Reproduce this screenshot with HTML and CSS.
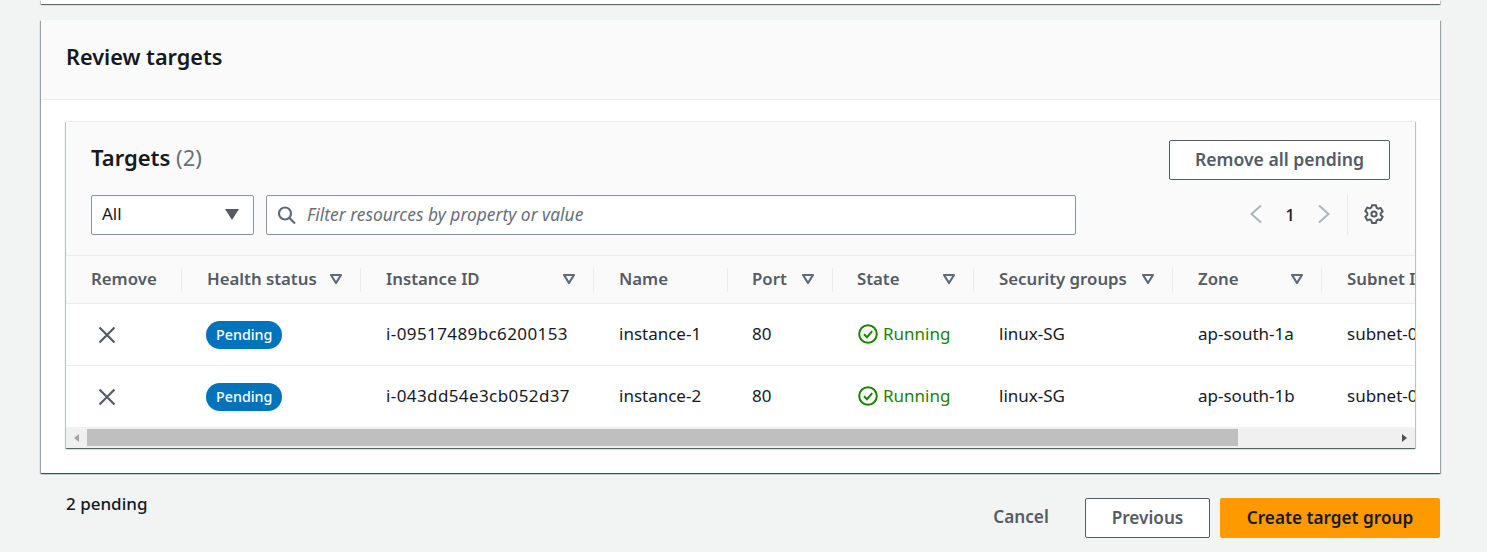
FILE: index.html
```html
<!DOCTYPE html>
<html lang="en">
  <head>
    <meta charset="UTF-8" />
    <meta name="viewport" content="width=device-width, initial-scale=1.0" />
    <title>Review targets</title>
    <link rel="stylesheet" href="styles.css">
  </head>
  <body>
    <main class="page">
      <div class="card-stub"></div>

      <!-- Review targets -->
      <section class="card">
        <header class="card-header">
          <h2>Review targets</h2>
        </header>
        <div class="card-body">
          <div class="targets">
            <div class="targets-top">
              <div class="title-row">
                <h3>Targets <span class="count">(2)</span></h3>
                <button class="btn btn-normal btn-remove">Remove all pending</button>
              </div>
              <div class="tools-row">
                <div class="select">
                  <span class="select-value">All</span>
                  <svg class="select-caret" width="16" height="16" viewBox="0 0 16 16"><path d="M1 3h14L8 14z" fill="#545b64"/></svg>
                </div>
                <div class="filter">
                  <svg class="filter-icon" width="20" height="20" viewBox="0 0 20 20" fill="none" stroke="#5f6b7a" stroke-width="2.200"><circle cx="8" cy="8.500" r="6"/><path d="M12.500 13l5.500 5.500"/></svg>
                  <span>Filter resources by property or value</span>
                </div>
                <div class="pager">
                  <svg width="16" height="20" viewBox="0 0 16 20" fill="none" stroke="#aab7b8" stroke-width="2"><path d="M13 1.500L3.500 10l9.500 8.500"/></svg>
                  <span class="page-num">1</span>
                  <svg width="16" height="20" viewBox="0 0 16 20" fill="none" stroke="#aab7b8" stroke-width="2"><path d="M3 1.500L12.500 10 3 18.500"/></svg>
                </div>
                <div class="prefs">
                  <svg width="20" height="20" viewBox="0 0 20 20" fill="none" stroke="#545b64" stroke-width="2" stroke-linejoin="round"><path d="M8 1.500h4l.6 2.600 1.500.9 2.600-.8 2 3.500-2 1.800v1.800l2 1.800-2 3.500-2.600-.8-1.500.9-.6 2.600H8l-.6-2.600-1.500-.9-2.600.8-2-3.500 2-1.800V9.200l-2-1.800 2-3.500 2.600.8 1.500-.9z" transform="translate(0 -.3)"/><circle cx="10" cy="10" r="2.600"/></svg>
                </div>
              </div>
            </div>

            <div class="table-wrap">
              <table>
                <colgroup>
                  <col class="col-remove"><col class="col-health"><col class="col-instance"><col class="col-name"><col class="col-port"><col class="col-state"><col class="col-sg"><col class="col-zone"><col class="col-subnet">
                </colgroup>
                <thead>
                  <tr>
                    <th><div class="th-in">Remove</div></th>
                    <th><div class="th-in">Health status <svg class="sort" width="14" height="14" viewBox="0 0 14 14"><path d="M2 3h10L7 11z" fill="none" stroke="#5f6b7a" stroke-width="2.200" stroke-linejoin="round"/></svg></div></th>
                    <th><div class="th-in">Instance ID <svg class="sort" width="14" height="14" viewBox="0 0 14 14"><path d="M2 3h10L7 11z" fill="none" stroke="#5f6b7a" stroke-width="2.200" stroke-linejoin="round"/></svg></div></th>
                    <th><div class="th-in">Name</div></th>
                    <th><div class="th-in">Port <svg class="sort" width="14" height="14" viewBox="0 0 14 14"><path d="M2 3h10L7 11z" fill="none" stroke="#5f6b7a" stroke-width="2.200" stroke-linejoin="round"/></svg></div></th>
                    <th><div class="th-in">State <svg class="sort" width="14" height="14" viewBox="0 0 14 14"><path d="M2 3h10L7 11z" fill="none" stroke="#5f6b7a" stroke-width="2.200" stroke-linejoin="round"/></svg></div></th>
                    <th><div class="th-in">Security groups <svg class="sort" width="14" height="14" viewBox="0 0 14 14"><path d="M2 3h10L7 11z" fill="none" stroke="#5f6b7a" stroke-width="2.200" stroke-linejoin="round"/></svg></div></th>
                    <th><div class="th-in">Zone <svg class="sort" width="14" height="14" viewBox="0 0 14 14"><path d="M2 3h10L7 11z" fill="none" stroke="#5f6b7a" stroke-width="2.200" stroke-linejoin="round"/></svg></div></th>
                    <th><div class="th-in th-last">Subnet ID</div></th>
                  </tr>
                </thead>
                <tbody>
                  <tr>
                    <td class="td-remove"><svg width="20" height="20" viewBox="0 0 20 20" stroke="#545b64" stroke-width="2.200"><path d="M2.500 2.500l15 15M17.500 2.500l-15 15"/></svg></td>
                    <td class="td-badge"><span class="badge">Pending</span></td>
                    <td class="td-id">i-09517489bc6200153</td>
                    <td>instance-1</td>
                    <td class="td-port">80</td>
                    <td class="td-state"><span class="running"><svg width="20" height="20" viewBox="0 0 20 20" fill="none" stroke="#1d8102" stroke-width="2"><circle cx="10" cy="10" r="8.800"/><path d="M6 10.200l3 3 5.200-6"/></svg>Running</span></td>
                    <td>linux-SG</td>
                    <td>ap-south-1a</td>
                    <td>subnet-0</td>
                  </tr>
                  <tr>
                    <td class="td-remove"><svg width="20" height="20" viewBox="0 0 20 20" stroke="#545b64" stroke-width="2.200"><path d="M2.500 2.500l15 15M17.500 2.500l-15 15"/></svg></td>
                    <td class="td-badge"><span class="badge">Pending</span></td>
                    <td class="td-id">i-043dd54e3cb052d37</td>
                    <td>instance-2</td>
                    <td class="td-port">80</td>
                    <td class="td-state"><span class="running"><svg width="20" height="20" viewBox="0 0 20 20" fill="none" stroke="#1d8102" stroke-width="2"><circle cx="10" cy="10" r="8.800"/><path d="M6 10.200l3 3 5.200-6"/></svg>Running</span></td>
                    <td>linux-SG</td>
                    <td>ap-south-1b</td>
                    <td>subnet-0</td>
                  </tr>
                </tbody>
              </table>
            </div>

            <div class="scrollbar">
              <span class="arrow arrow-left"></span>
              <div class="thumb"></div>
              <span class="arrow arrow-right"></span>
            </div>
          </div>
        </div>
      </section>

      <footer class="footer">
        <span class="pending">2 pending</span>
        <div class="actions">
          <button class="btn btn-link">Cancel</button>
          <button class="btn btn-normal btn-prev">Previous</button>
          <button class="btn btn-primary">Create target group</button>
        </div>
      </footer>
    </main>
  </body>
</html>
```

FILE: styles.css
```css
html,
body {
  margin: 0;
  padding: 0;
  height: 552px;
  overflow: hidden;
}
body {
  font-family: "Noto Sans", sans-serif;
  font-size: 17px;
  color: #16191f;
  background-color: #f2f3f3;
}
.page {
  padding: 0 47px 0 41px;
}
.card-stub {
  height: 4px;
  background-color: white;
  box-shadow: 0 1px 1px 0 rgba(0, 28, 36, 0.5), 1px 1px 1px 0 rgba(0, 28, 36, 0.2), -1px 1px 1px 0 rgba(0, 28, 36, 0.2);
}
.card {
  margin-top: 16px;
  background-color: white;
  box-shadow: 0 1px 1px 0 rgba(0, 28, 36, 0.5), 1px 1px 1px 0 rgba(0, 28, 36, 0.3), -1px 1px 1px 0 rgba(0, 28, 36, 0.3);
}
.card-header {
  height: 80px;
  box-sizing: border-box;
  padding: 0 25px 6px;
  display: flex;
  align-items: center;
  background-color: #fafafa;
  border-bottom: 1px solid #eaeded;
}
.card-header h2 {
  margin: 0;
  font-size: 21.700px;
  font-weight: 600;
  line-height: 28px;
}
.card-body {
  padding: 21px 25px 25px;
}
.targets {
  background-color: white;
  box-shadow: 0 1px 1px 0 rgba(0, 28, 36, 0.5), 1px 1px 1px 0 rgba(0, 28, 36, 0.2), -1px 1px 1px 0 rgba(0, 28, 36, 0.2);
  border-top: 1px solid #eaeded;
}
.targets-top {
  background-color: #fafafa;
  padding: 18px 25px 20px;
}
.title-row {
  display: flex;
  justify-content: space-between;
  align-items: flex-start;
  height: 40px;
}
.title-row h3 {
  margin: 0;
  font-size: 22px;
  font-weight: 600;
  line-height: 34px;
}
.count {
  font-weight: 400;
  color: #687078;
}
.tools-row {
  display: flex;
  align-items: center;
  margin-top: 15px;
  height: 40px;
}
.select {
  width: 163px;
  height: 40px;
  box-sizing: border-box;
  border: 1px solid #879596;
  border-radius: 2px;
  background-color: white;
  display: flex;
  align-items: center;
  justify-content: space-between;
  padding: 0 13px 2px 10px;
}
.select-value {
  margin-bottom: 2px;
}
.filter {
  width: 810px;
  height: 40px;
  box-sizing: border-box;
  margin-left: 12px;
  border: 1px solid #879596;
  border-radius: 2px;
  background-color: white;
  display: flex;
  align-items: center;
  gap: 10px;
  padding: 0 10px 2px;
  font-size: 17.400px;
  font-style: italic;
  color: #687078;
}
.filter-icon {
  margin-top: 2px;
}
.pager {
  margin-left: auto;
  padding-bottom: 2px;
  display: flex;
  align-items: center;
  color: #16191f;
}
.page-num {
  width: 52px;
  text-align: center;
  font-weight: 500;
}
.prefs {
  height: 40px;
  box-sizing: border-box;
  margin-left: 15px;
  padding: 0 6px 2px 16px;
  border-left: 1px solid #eaeded;
  display: flex;
  align-items: center;
}
.btn {
  font-family: inherit;
  font-size: 17.200px;
  font-weight: 600;
  height: 40px;
  box-sizing: border-box;
  border-radius: 2px;
  padding-bottom: 3px;
  cursor: pointer;
}
.btn-normal {
  background-color: white;
  color: #545b64;
  border: 1px solid #545b64;
}
.btn-remove {
  width: 221px;
  font-size: 17.600px;
}
.table-wrap {
  overflow: hidden;
}
table {
  border-collapse: collapse;
  table-layout: fixed;
  width: 1451px;
}
.col-remove { width: 116px; }
.col-health { width: 179px; }
.col-instance { width: 233px; }
.col-name { width: 134px; }
.col-port { width: 105px; }
.col-state { width: 141px; }
.col-sg { width: 199px; }
.col-zone { width: 149px; }
.col-subnet { width: 195px; }
th {
  height: 47px;
  padding: 0;
  background-color: #fafafa;
  border-top: 1px solid #eaeded;
  border-bottom: 1px solid #eaeded;
  color: #545b64;
  font-size: 16.800px;
  font-weight: 600;
  text-align: left;
  white-space: nowrap;
}
.th-in {
  height: 24px;
  box-sizing: border-box;
  display: flex;
  align-items: center;
  justify-content: space-between;
  padding: 0 17px 2px 25px;
  border-right: 1px solid #eaeded;
}
th:nth-child(5) .th-in,
th:nth-child(6) .th-in {
  padding-left: 24px;
}
.th-last {
  border-right: none;
}
td {
  height: 59px;
  padding: 0 0 2px 25px;
  border-bottom: 1px solid #eaeded;
  white-space: nowrap;
  overflow: hidden;
}
tbody tr:last-child td {
  border-bottom: none;
}
.td-remove {
  height: 61px;
  padding: 0 0 0 31px;
  line-height: 0;
}
.td-badge {
  height: 61px;
  padding: 0 0 0 24px;
}
.td-id {
  letter-spacing: 0.4px;
}
.td-port {
  padding-left: 24px;
}
.td-state {
  height: 57px;
  padding-bottom: 4px;
}
.badge {
  display: inline-block;
  padding: 0 10px;
  height: 28px;
  line-height: 27px;
  border-radius: 14px;
  background-color: #0073bb;
  color: white;
  font-size: 14.300px;
  font-weight: 500;
  vertical-align: middle;
}
.running {
  display: inline-flex;
  align-items: center;
  gap: 5px;
  color: #1d8102;
  vertical-align: middle;
}
.running svg {
  margin-top: 2px;
}
.scrollbar {
  height: 21px;
  box-sizing: border-box;
  background-color: #f0f0f0;
  padding: 2px 0 2px;
  display: flex;
  align-items: center;
}
.arrow {
  width: 0;
  height: 0;
  border-top: 4px solid transparent;
  border-bottom: 4px solid transparent;
}
.arrow-left {
  margin-left: 8px;
  border-right: 5px solid #a3a3a3;
}
.arrow-right {
  margin-left: auto;
  margin-right: 8px;
  border-left: 5px solid #505050;
}
.thumb {
  width: 1151px;
  height: 17px;
  margin-left: 8px;
  background-color: #bfbfbf;
}
.footer {
  display: flex;
  justify-content: space-between;
  padding: 25px 0 0 25px;
}
.pending {
  font-weight: 500;
  line-height: 12px;
}
.actions {
  display: flex;
  gap: 10px;
}
.btn-link {
  background: none;
  border: none;
  color: #545b64;
  width: 90px;
  padding: 0 0 3px;
  margin-right: 9px;
}
.btn-prev {
  width: 125px;
}
.btn-primary {
  width: 220px;
  background-color: #ff9900;
  border: none;
  color: #16191f;
}
```
